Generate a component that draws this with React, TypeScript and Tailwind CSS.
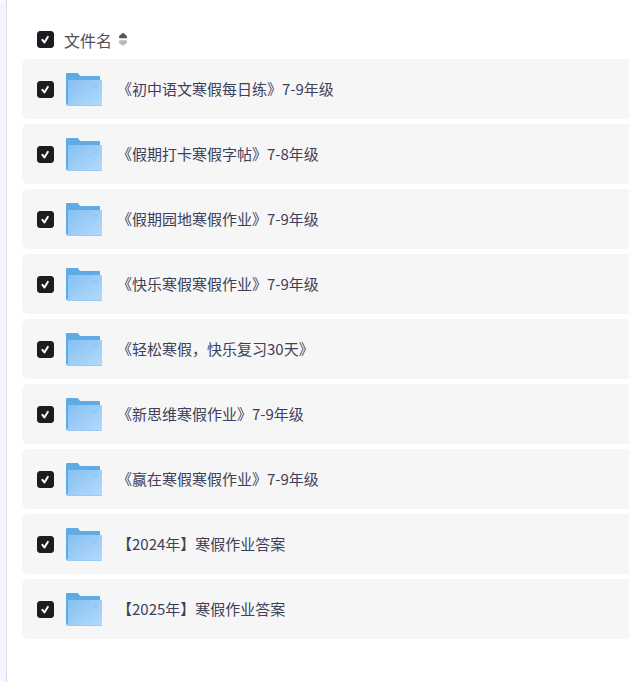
import { useState } from 'react';

const FILES = [
  '《初中语文寒假每日练》7-9年级',
  '《假期打卡寒假字帖》7-8年级',
  '《假期园地寒假作业》7-9年级',
  '《快乐寒假寒假作业》7-9年级',
  '《轻松寒假，快乐复习30天》',
  '《新思维寒假作业》7-9年级',
  '《赢在寒假寒假作业》7-9年级',
  '【2024年】寒假作业答案',
  '【2025年】寒假作业答案',
];

interface CheckboxProps {
  id: string;
  label: string;
  checked: boolean;
  onChange: () => void;
}

function Checkbox({ id, label, checked, onChange }: CheckboxProps) {
  return (
    <span className="relative flex shrink-0">
      <input
        id={id}
        type="checkbox"
        aria-label={label}
        checked={checked}
        onChange={onChange}
        className="peer h-[17px] w-[17px] cursor-pointer appearance-none rounded-[3px] border border-[#c4c6cf] bg-white checked:border-[#1c1c21] checked:bg-[#1c1c21]"
      />
      <svg
        viewBox="0 0 17 17"
        fill="none"
        className="pointer-events-none absolute inset-0 hidden h-full w-full peer-checked:block"
      >
        <path d="M5.4 8.9 7.4 11.5 10.8 5.9" stroke="#fff" strokeWidth="2" strokeLinecap="round" strokeLinejoin="round" />
      </svg>
    </span>
  );
}

function FolderIcon() {
  return (
    <svg viewBox="0 0 36 33" className="h-[33px] w-9 shrink-0" aria-hidden="true">
      <defs>
        <linearGradient id="folder-front" x1="0" y1="0" x2="1" y2="1">
          <stop offset="0" stopColor="#84c0f1" />
          <stop offset="1" stopColor="#b4dafc" />
        </linearGradient>
      </defs>
      <path d="M0 1.2Q0 0 1.2 0H11.3Q12 0 12.5.7L14 3H33Q34 3 34 4V32H1Q0 32 0 31Z" fill="#5fabe5" />
      <path d="M2 7H35.3Q36 7 36 7.8V32Q36 33 35 33H1.4Q.6 33 .7 32L2 30Z" fill="url(#folder-front)" />
      <path d="M1 32.5H35.5" stroke="#98caf3" strokeWidth="1" />
      <path d="M27.5 12.5H32M27.5 14.5H31" stroke="#86bfef" strokeWidth=".7" />
    </svg>
  );
}

function SortIcon() {
  return (
    <svg viewBox="0 0 8 13" className="h-[13px] w-2" aria-hidden="true">
      <path d="M3.2.3Q4 -.2 4.8 .3L7.4 2.4Q8 3 8 3.8V4.2Q8 5.2 7 5.2H1Q0 5.2 0 4.2V3.8Q0 3 .6 2.4Z" fill="#56575c" />
      <path d="M3.2 12.3Q4 12.8 4.8 12.3L7.4 10.2Q8 9.6 8 8.8V8.2Q8 7.2 7 7.2H1Q0 7.2 0 8.2V8.8Q0 9.6 .6 10.2Z" fill="#b8b9bc" />
    </svg>
  );
}

export default function App() {
  const [selected, setSelected] = useState<string[]>(FILES);
  const [reversed, setReversed] = useState(false);

  const allSelected = selected.length === FILES.length;
  const files = reversed ? [...FILES].reverse() : FILES;

  const toggle = (name: string) => {
    setSelected((prev) => (prev.includes(name) ? prev.filter((n) => n !== name) : [...prev, name]));
  };

  return (
    <div className="flex min-h-screen bg-white font-['Noto_Sans_CJK_SC',sans-serif]">
      <div className="w-[7px] shrink-0 rounded-l-md border-r border-[#d9dce6] bg-[#f2f4ff]" />

      <main className="min-w-0 flex-1 pt-5 pl-[15px]">
        <div className="flex h-[39px] items-center pl-[15px]">
          <Checkbox
            id="select-all"
            label="全选"
            checked={allSelected}
            onChange={() => setSelected(allSelected ? [] : FILES)}
          />
          <button
            type="button"
            onClick={() => setReversed(!reversed)}
            className="ml-[10px] flex cursor-pointer items-center gap-[7px] text-base leading-[22px] text-[#505158]"
          >
            文件名
            <SortIcon />
          </button>
        </div>

        <ul className="flex flex-col gap-[5px]">
          {files.map((name) => (
            <li key={name} className="flex h-[60px] items-center rounded-l-md bg-[#f6f6f6] pl-[15px]">
              <Checkbox
                id={name}
                label={name}
                checked={selected.includes(name)}
                onChange={() => toggle(name)}
              />
              <label htmlFor={name} className="flex min-w-0 flex-1 cursor-pointer items-center gap-[15px] pl-3">
                <FolderIcon />
                <span className="truncate text-[15px] leading-6 text-[#3d405a]">{name}</span>
              </label>
            </li>
          ))}
        </ul>
      </main>
    </div>
  );
}
